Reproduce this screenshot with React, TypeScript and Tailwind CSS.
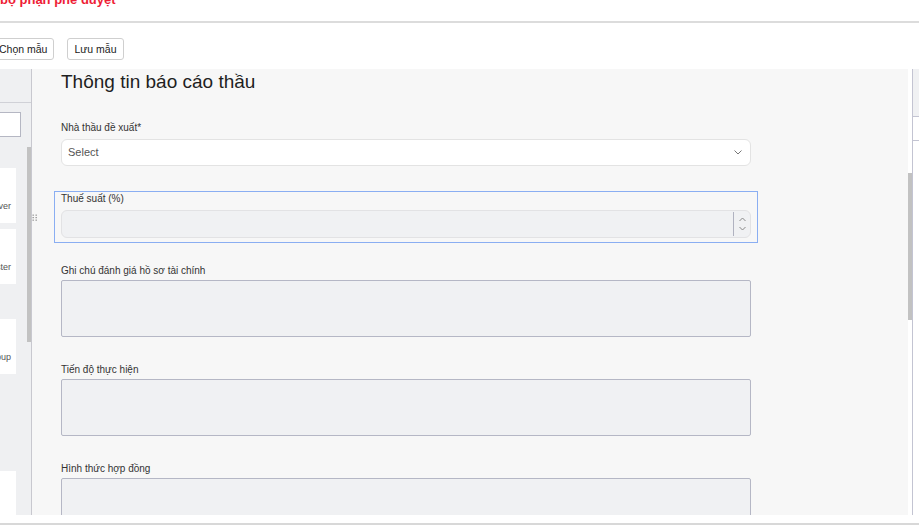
import { ReactNode } from 'react'

function Grip() {
  return (
    <svg width="5" height="7" viewBox="0 0 5 7" className="absolute left-[-23px] top-[22px]">
      {[0.6, 3.6].map(x =>
        [0.6, 3.1, 5.6].map(y => <rect key={`${x}-${y}`} x={x} y={y} width="1.1" height="1.1" fill="#6b6b6b" />)
      )}
    </svg>
  )
}

function Field({ label, active, tight, children }: { label: string; active?: boolean; tight?: boolean; children: ReactNode }) {
  return (
    <div
      className={`relative w-[704px] border px-[6px] pt-px pb-[4px] ${active ? 'border-[#8aaef2]' : 'border-transparent'}`}
    >
      {active && <Grip />}
      <div className={`text-[10px] leading-[12px] text-[#333] whitespace-nowrap ${tight ? 'mb-[3px]' : 'mb-[5px]'}`}>{label}</div>
      {children}
    </div>
  )
}

function Area() {
  return <div className="h-[57px] w-full bg-[#f0f1f3] border border-[#b5b7c5] rounded-[2px]" />
}

export default function App() {
  return (
    <div className="w-[919px] h-[532px] overflow-hidden bg-white font-['Liberation_Sans',Arial,sans-serif] flex flex-col">
      {/* Header */}
      <div className="h-[23px] shrink-0 border-b-2 border-[#dcdcdc] overflow-hidden">
        <div className="mt-[-8px] text-[13px] leading-[16px] font-bold text-[#ee1d36]">bộ phận phê duyệt</div>
      </div>

      {/* Toolbar */}
      <div className="h-[46px] shrink-0 pt-[15px] flex gap-[13px] ml-[-8px]">
        {['Chọn mẫu', 'Lưu mẫu'].map(t => (
          <button
            key={t}
            className="h-[22px] px-[6px] text-[10.5px] leading-[20px] text-[#222] bg-white border border-[#cfcfcf] rounded-[3px]"
          >
            {t}
          </button>
        ))}
      </div>

      {/* Main */}
      <div className="h-[446px] shrink-0 flex">
        {/* Left panel */}
        <div className="w-[32px] shrink-0 bg-[#eff0f2] border-r border-[#c8c8cf] flex flex-col overflow-hidden">
          <div className="h-[34px] shrink-0 border-b border-[#d0d1d7]" />
          <div className="flex flex-1 min-h-0">
            <div className="flex-1 flex flex-col items-end overflow-hidden">
              <div className="mt-[9px] mr-[6px] w-[60px] h-[25px] shrink-0 bg-white border border-[#b5b7c3]" />
              {[
                { t: 'Approver', mt: 'mt-[31px]' },
                { t: 'Tester', mt: 'mt-[6px]' },
                { t: 'Group', mt: 'mt-[35px]' },
                { t: '', mt: 'mt-[97px]' },
              ].map((c, i) => (
                <div
                  key={i}
                  className={`${c.mt} mr-[11px] w-[60px] h-[55px] shrink-0 bg-white flex justify-end pt-[32px] pr-[5px] text-[9px] leading-[12px] text-[#555]`}
                >
                  {c.t}
                </div>
              ))}
            </div>
            <div className="w-[4px] shrink-0">
              <div className="mt-[44px] h-[195px] bg-[#c2c2c2]" />
            </div>
          </div>
        </div>

        {/* Form */}
        <div className="flex-1 flex bg-white min-w-0">
          <div className="flex-1 bg-[#f7f7f7] overflow-hidden pt-px pl-[22px]">
            <h2 className="ml-[7px] text-[19px] leading-[24px] text-[#1f1f1f] mb-[26px] whitespace-nowrap">
              Thông tin báo cáo thầu
            </h2>
            <div className="flex flex-col gap-[20px]">
              <Field label="Nhà thầu đề xuất*">
                <div className="h-[27px] w-full bg-white border border-[#e3e3e3] rounded-[6px] flex items-center justify-between pl-[6px] pr-[8px]">
                  <span className="text-[11px] text-[#555]">Select</span>
                  <svg width="8" height="5" viewBox="0 0 8 5">
                    <path d="M0.5 0.5 L4 4 L7.5 0.5" stroke="#777" strokeWidth="1" fill="none" />
                  </svg>
                </div>
              </Field>
              <Field label="Thuế suất (%)" active>
                <div className="h-[28px] w-full bg-[#f0f1f3] border border-[#e2e2e4] rounded-[6px] flex justify-end">
                  <div className="w-[17px] my-px border-l border-[#b0b2c0] flex flex-col items-center justify-center gap-[4px]">
                    <svg width="7" height="5" viewBox="0 0 7 5">
                      <path d="M0.5 4 L3.5 1 L6.5 4" stroke="#888" strokeWidth="1" fill="none" />
                    </svg>
                    <svg width="7" height="5" viewBox="0 0 7 5">
                      <path d="M0.5 1 L3.5 4 L6.5 1" stroke="#888" strokeWidth="1" fill="none" />
                    </svg>
                  </div>
                </div>
              </Field>
              <Field label="Ghi chú đánh giá hồ sơ tài chính" tight>
                <Area />
              </Field>
              <Field label="Tiến độ thực hiện" tight>
                <Area />
              </Field>
              <Field label="Hình thức hợp đồng" tight>
                <Area />
              </Field>
            </div>
          </div>
          <div className="w-[4px] shrink-0">
            <div className="mt-[104px] h-[147px] bg-[#c2c2c2]" />
          </div>
        </div>

        {/* Right panel */}
        <div className="w-[7px] shrink-0 border-l border-[#c3c4d2] flex flex-col">
          <div className="h-[48px] bg-[#f0f1f3] border-b border-[#c3c4d2]" />
          <div className="h-[24px] border-b border-[#c3c4d2]" />
        </div>
      </div>

      {/* Footer */}
      <div className="h-[8px] shrink-0" />
      <div className="flex-1 border-t-2 border-[#d8d8d8]" />
    </div>
  )
}
